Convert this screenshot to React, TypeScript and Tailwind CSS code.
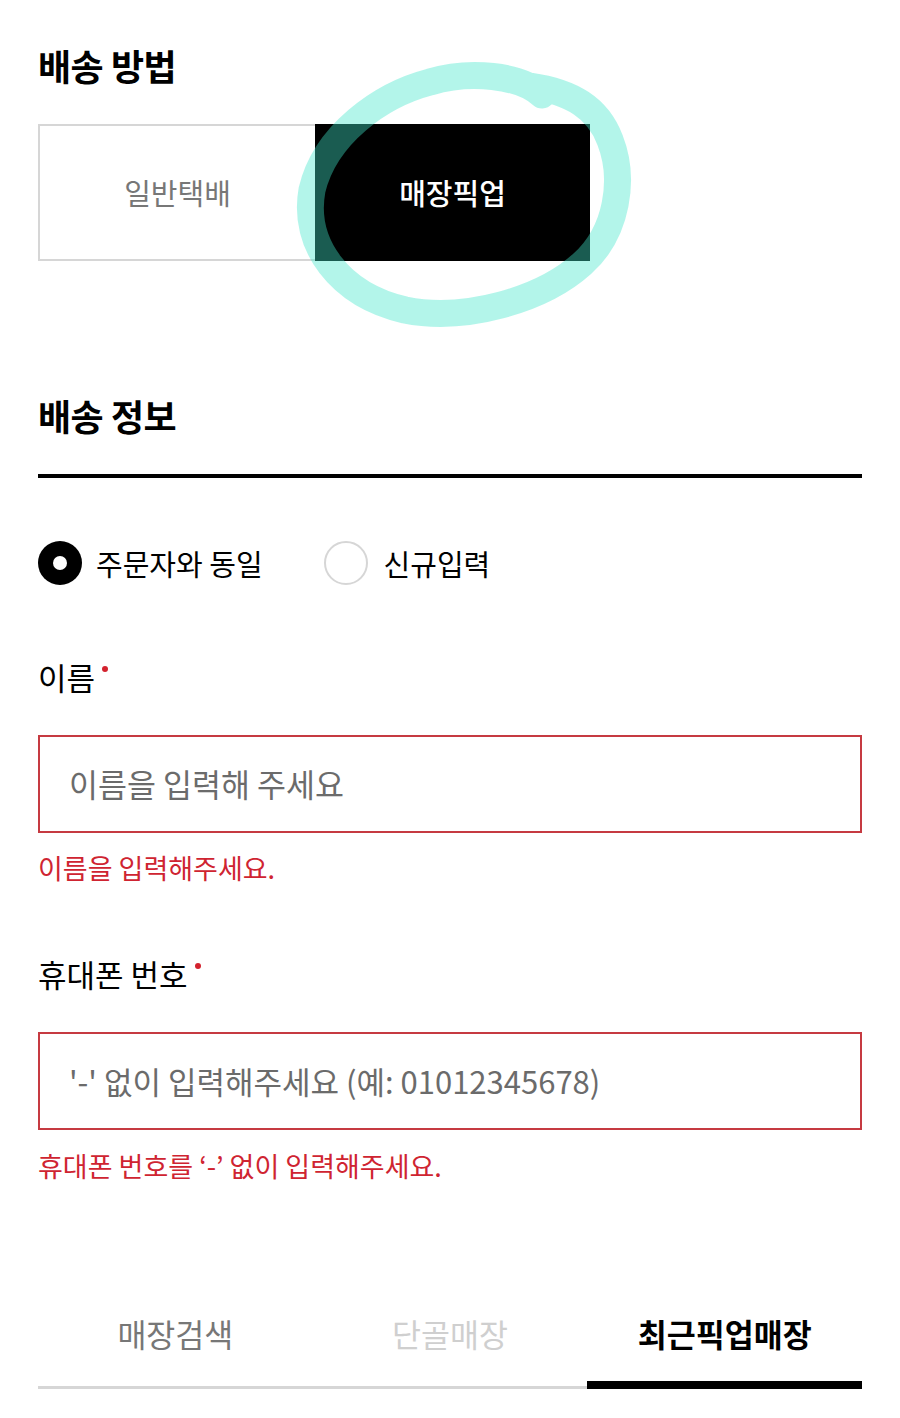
import React from "react";

const font = { fontFamily: '"Noto Sans CJK KR", "Noto Sans", sans-serif' };

function RedDot() {
  return <span className="ml-[7px] inline-block h-[6px] w-[6px] self-start mt-[7px] rounded-full bg-[#d3222e]" />;
}

export default function App() {
  return (
    <div className="relative w-[900px] min-h-[1418px] bg-white px-[38px] pt-[45px] text-black" style={font}>
      <h2 className="text-[36px] leading-[40px] font-bold tracking-[-0.5px]">배송 방법</h2>

      <div className="mt-[39px] flex h-[137px] w-[552px]">
        <button className="flex flex-1 items-center justify-center border-2 border-r-0 border-[#d6d6d6] text-[29px] text-[#777]">
          일반택배
        </button>
        <button className="flex flex-1 items-center justify-center bg-black text-[29px] font-medium text-white">
          매장픽업
        </button>
      </div>

      <h2 className="mt-[134px] text-[36px] leading-[40px] font-bold tracking-[-0.5px]">배송 정보</h2>
      <div className="mt-[39px] h-[4px] w-full bg-black" />

      <div className="mt-[63px] flex items-center">
        <div className="flex items-center">
          <span className="flex h-[44px] w-[44px] items-center justify-center rounded-full bg-black">
            <span className="h-[14px] w-[14px] rounded-full bg-white" />
          </span>
          <span className="ml-[14px] text-[29px] leading-[44px]">주문자와 동일</span>
        </div>
        <div className="ml-[61px] flex items-center">
          <span className="h-[44px] w-[44px] rounded-full border-2 border-[#d6d6d6]" />
          <span className="ml-[16px] text-[29px] leading-[44px]">신규입력</span>
        </div>
      </div>

      <div className="mt-[74px] flex items-start text-[31px] leading-[36px]">
        <span>이름</span>
        <RedDot />
      </div>
      <div className="mt-[40px] flex h-[98px] items-center border-2 border-[#c63a41] px-[29px]">
        <span className="text-[31.5px] text-[#6b6b6b]">이름을 입력해 주세요</span>
      </div>
      <p className="mt-[17px] text-[27px] leading-[36px] text-[#cf2431]">이름을 입력해주세요.</p>

      <div className="mt-[70px] flex items-start text-[31px] leading-[36px]">
        <span>휴대폰 번호</span>
        <RedDot />
      </div>
      <div className="mt-[40px] flex h-[98px] items-center border-2 border-[#c63a41] px-[29px]">
        <span className="text-[31px] text-[#6b6b6b]">'-' 없이 입력해주세요 (예: 01012345678)</span>
      </div>
      <p className="mt-[18px] text-[27px] leading-[36px] text-[#cf2431]">휴대폰 번호를 ‘-’ 없이 입력해주세요.</p>

      <div className="mt-[129px] flex">
        <div className="flex flex-1 flex-col items-center">
          <span className="text-[31.5px] leading-[40px] text-[#777]">매장검색</span>
          <div className="mt-[33px] h-[3px] w-full bg-[#d6d6d6]" />
        </div>
        <div className="flex flex-1 flex-col items-center">
          <span className="text-[31.5px] leading-[40px] text-[#cfcfcf]">단골매장</span>
          <div className="mt-[33px] h-[3px] w-full bg-[#d6d6d6]" />
        </div>
        <div className="flex flex-1 flex-col items-center">
          <span className="text-[31.5px] leading-[40px] font-bold">최근픽업매장</span>
          <div className="mt-[28px] h-[8px] w-full bg-black" />
        </div>
      </div>

      <svg
        className="pointer-events-none absolute left-[280px] top-[50px]"
        width="380"
        height="300"
        viewBox="0 0 380 300"
        fill="none"
      >
        <path
          d="M 262 45 C 240 25, 190 20, 150 32 C 100 45, 45 85, 32 140 C 22 195, 60 245, 125 260 C 185 272, 262 250, 302 214 C 338 182, 345 128, 330 90 C 318 58, 292 42, 250 36"
          stroke="#40e6ca"
          strokeWidth="27"
          strokeLinecap="round"
          strokeLinejoin="round"
          opacity="0.4"
        />
      </svg>
    </div>
  );
}
